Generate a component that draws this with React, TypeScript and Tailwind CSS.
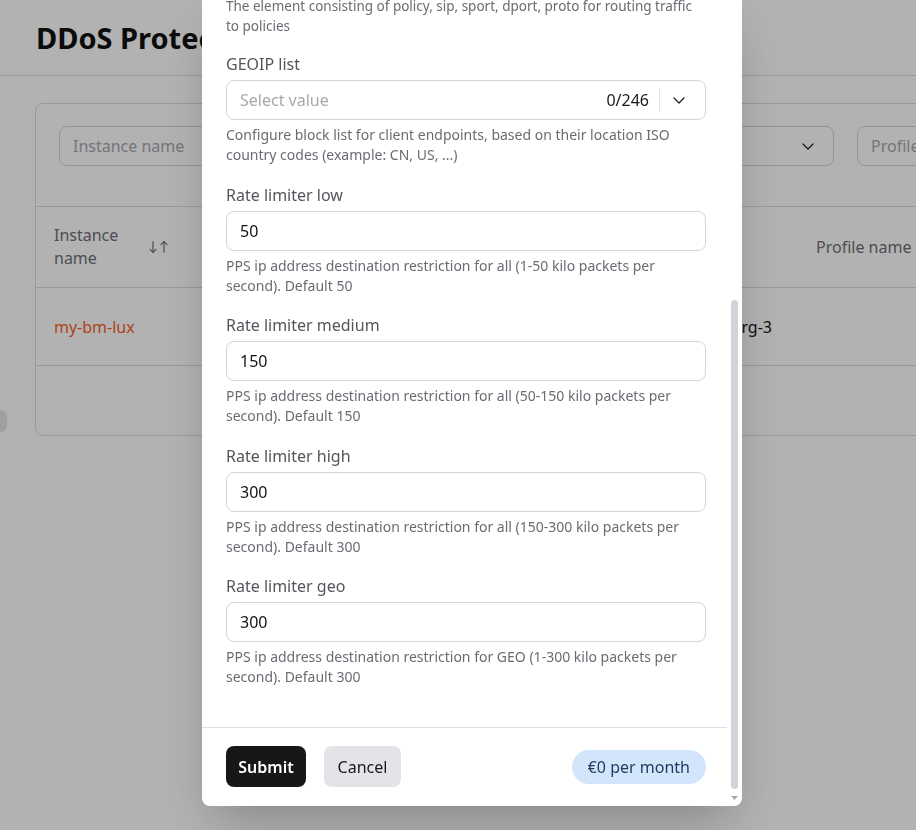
import type { ReactNode } from "react";

const font = { fontFamily: '"Noto Sans", "Open Sans", Arial, sans-serif' };

function Chevron({ className = "" }: { className?: string }) {
  return (
    <svg width="12" height="7" viewBox="0 0 12 7" fill="none" className={className}>
      <polyline points="1,1 6,6 11,1" stroke="#1f1f1f" strokeWidth="1.3" strokeLinecap="round" strokeLinejoin="round" />
    </svg>
  );
}

function SortIcon() {
  return (
    <svg width="20" height="12" viewBox="0 0 20 12" fill="none">
      <g stroke="#6f6f76" strokeWidth="1.2" strokeLinecap="round" strokeLinejoin="round">
        <line x1="4" y1="0.7" x2="4" y2="11.3" />
        <polyline points="1,8.3 4,11.3 7,8.3" />
        <line x1="15" y1="0.7" x2="15" y2="11.3" />
        <polyline points="12,3.7 15,0.7 18,3.7" />
      </g>
    </svg>
  );
}

function Field({
  label,
  help,
  children,
  className = "",
  helpClassName = "text-sm",
}: {
  label: string;
  help: ReactNode;
  children: ReactNode;
  className?: string;
  helpClassName?: string;
}) {
  return (
    <div className={`flex flex-col ${className}`}>
      <label className="mb-[5px] text-base leading-[22px] text-[#55555c]">{label}</label>
      {children}
      <p className={`mt-[5px] leading-5 text-[#6b6b73] ${helpClassName}`}>{help}</p>
    </div>
  );
}

function NumberInput({ value }: { value: string }) {
  return (
    <div className="flex h-10 items-center rounded-lg border border-[#d4d4d8] bg-white px-[13px] text-base text-[#141414]">
      {value}
    </div>
  );
}

function BackgroundPage() {
  return (
    <div className="h-screen w-full overflow-hidden bg-white" style={font}>
      <div className="flex h-[76px] items-center border-b border-[#dcdcdc] px-9">
        <h1 className="text-[29px] font-bold text-[#111]">DDoS Protection</h1>
      </div>
      <div className="flex">
        <div className="mt-[334px] h-[22px] w-[7px] shrink-0 rounded-r-md bg-[#e6e6e6]" />
        <div className="ml-[28px] mt-[27px] w-[1100px] shrink-0 rounded-lg border border-[#dadada]">
          <div className="flex gap-[23px] border-b border-[#dadada] px-[23px] pb-[40px] pt-[22px]">
            <div className="flex h-10 w-[240px] items-center rounded-lg border border-[#d4d4d8] px-[13px] text-base text-[#a8a8ae]">
              Instance name
            </div>
            <div className="flex h-10 w-[512px] items-center justify-between rounded-lg border border-[#d4d4d8] px-[13px] text-base text-[#a8a8ae]">
              <span>Location</span>
              <Chevron className="mr-[6px]" />
            </div>
            <div className="flex h-10 w-[200px] items-center rounded-lg border border-[#d4d4d8] px-[13px] text-base text-[#a8a8ae]">
              Profile name
            </div>
          </div>
          <div className="flex h-[81px] items-center border-b border-[#dadada] text-base text-[#6f6f76]">
            <div className="flex w-[170px] items-center px-[18px]">
              <span className="w-[80px] leading-[23px]">Instance name</span>
              <span className="ml-[15px]">
                <SortIcon />
              </span>
            </div>
            <div className="w-[390px] px-[18px]">Location</div>
            <div className="w-[202px] px-[18px]">Resource group</div>
            <div className="px-[18px]">Profile name</div>
          </div>
          <div className="flex h-[78px] items-center border-b border-[#dadada] text-base">
            <div className="w-[170px] px-[18px] text-[#f8612c]">my-bm-lux</div>
            <div className="w-[390px] px-[18px] text-[#141414]">Luxembourg</div>
            <div className="w-[202px] pr-[26px] text-right text-[#141414]">lux-rg-3</div>
          </div>
          <div className="h-[69px]" />
        </div>
      </div>
    </div>
  );
}

function Modal() {
  return (
    <div
      className="fixed bottom-[24px] left-[202px] top-[-8px] flex w-[540px] overflow-hidden rounded-lg bg-white shadow-2xl"
      style={font}
    >
      <div className="flex min-w-0 flex-1 flex-col justify-end overflow-hidden">
        <div className="flex flex-col pb-10 pl-6 pr-[21px]">
          <h2 className="mb-6 text-xl font-semibold text-[#141414]">Edit DDoS protection</h2>
          <Field
            className="mb-[17px]"
            helpClassName="text-[13.5px]"
            label="Policy rules"
            help={
              <>
                The element consisting of policy, sip, sport, dport, proto for routing traffic
                <br />
                to policies
              </>
            }
          >
            <div className="flex h-10 items-center rounded-lg border border-[#d4d4d8] px-[13px] text-base text-[#a8a8ae]">
              Add rule
            </div>
          </Field>
          <Field
            className="mb-[19px]"
            label="GEOIP list"
            help="Configure block list for client endpoints, based on their location ISO country codes (example: CN, US, ...)"
          >
            <div className="flex h-10 items-center rounded-lg border border-[#d4d4d8] bg-white pl-[13px] text-base">
              <span className="flex-1 text-[#a8a8ae]">Select value</span>
              <span className="text-[#1a1a1a]">0/246</span>
              <span className="ml-[10px] h-6 w-px bg-[#e2e2e6]" />
              <span className="flex pl-[13px] pr-[20px]">
                <Chevron />
              </span>
            </div>
          </Field>
          <Field
            className="mb-[18px]"
            label="Rate limiter low"
            help="PPS ip address destination restriction for all (1-50 kilo packets per second). Default 50"
          >
            <NumberInput value="50" />
          </Field>
          <Field
            className="mb-[19px]"
            label="Rate limiter medium"
            help="PPS ip address destination restriction for all (50-150 kilo packets per second). Default 150"
          >
            <NumberInput value="150" />
          </Field>
          <Field
            className="mb-[18px]"
            label="Rate limiter high"
            help="PPS ip address destination restriction for all (150-300 kilo packets per second). Default 300"
          >
            <NumberInput value="300" />
          </Field>
          <Field
            label="Rate limiter geo"
            help="PPS ip address destination restriction for GEO (1-300 kilo packets per second). Default 300"
          >
            <NumberInput value="300" />
          </Field>
        </div>
        <div className="flex items-center border-t border-[#dfdfe5] pb-[19px] pl-6 pr-[21px] pt-[18px]">
          <button className="h-[41px] w-20 rounded-lg bg-[#171717] text-base font-semibold text-white">
            Submit
          </button>
          <button className="ml-[18px] h-[41px] w-[77px] rounded-lg bg-[#e4e4e8] text-base text-[#1a1a1a]">
            Cancel
          </button>
          <span className="ml-auto flex h-[34px] items-center rounded-full bg-[#d3e5fb] px-4 text-base text-[#1e3a5f]">
            €0 per month
          </span>
        </div>
      </div>
      <div className="flex w-[15px] shrink-0 flex-col items-center justify-end pb-[6px]">
        <div className="h-[489px] w-[7px] rounded-full bg-[#d3d2d8]" />
        <svg width="7" height="4" viewBox="0 0 7 4" className="mt-[7px]">
          <polygon points="0,0 7,0 3.5,4" fill="#a9a9b0" />
        </svg>
      </div>
    </div>
  );
}

export default function App() {
  return (
    <div className="relative h-screen w-full overflow-hidden">
      <BackgroundPage />
      <div className="fixed inset-0 bg-black/30" />
      <Modal />
    </div>
  );
}
